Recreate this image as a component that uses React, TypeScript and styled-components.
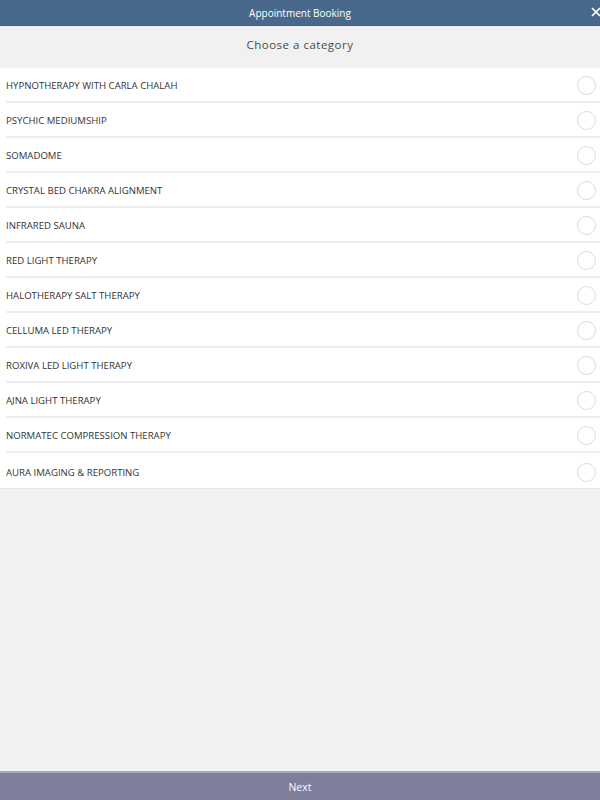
import React from 'react';
import styled, { createGlobalStyle } from 'styled-components';

const GlobalStyle = createGlobalStyle`
  html, body { margin: 0; padding: 0; height: 100%; }
  body { background: #f1f1f1; font-family: 'Open Sans', 'Liberation Sans', sans-serif; }
  #root { height: 100%; }
`;

const Page = styled.div`
  display: flex;
  flex-direction: column;
  height: 800px;
  background: #f1f1f1;
`;

const TopBar = styled.div`
  position: relative;
  height: 26px;
  background: #48698c;
  border-bottom: 1px solid #3d5c7e;
  box-sizing: border-box;
  display: flex;
  align-items: center;
  justify-content: center;
  color: #ffffff;
  font-size: 10px;
`;

const CloseButton = styled.div`
  position: absolute;
  right: -2px;
  top: 6px;
  width: 12px;
  height: 12px;
`;

const Heading = styled.div`
  height: 42px;
  box-sizing: border-box;
  padding-bottom: 5px;
  display: flex;
  align-items: center;
  justify-content: center;
  color: #4a4a4a;
  font-size: 11.5px;
  letter-spacing: 0.5px;
`;

const List = styled.div`
  background: #ffffff;
  display: flex;
  flex-direction: column;
  border-bottom: 1px solid #e6e6e6;
`;

const Row = styled.div<{ $last?: boolean }>`
  height: 35px;
  box-sizing: border-box;
  margin-left: 6px;
  padding-top: ${(p) => (p.$last ? '3px' : '2px')};
  display: flex;
  align-items: center;
  justify-content: space-between;
  border-bottom: ${(p) => (p.$last ? 'none' : '2px solid #eeeeee')};
`;

const Label = styled.span`
  font-size: 9.6px;
  color: #333333;
  text-transform: uppercase;
`;

const Radio = styled.span`
  width: 19px;
  height: 19px;
  border-radius: 50%;
  border: 1px solid #dcdcdc;
  box-sizing: border-box;
  margin-right: 4px;
`;

const Spacer = styled.div`
  flex: 1;
`;

const Footer = styled.div`
  height: 29px;
  box-sizing: border-box;
  background: #7f7e9c;
  border-top: 2px solid #a9a8bd;
  display: flex;
  align-items: center;
  justify-content: center;
  color: #ffffff;
  font-size: 10.5px;
`;

const categories = [
  'Hypnotherapy with Carla Chalah',
  'Psychic Mediumship',
  'Somadome',
  'Crystal Bed Chakra Alignment',
  'Infrared Sauna',
  'Red Light Therapy',
  'Halotherapy Salt Therapy',
  'Celluma LED Therapy',
  'Roxiva LED Light Therapy',
  'Ajna Light Therapy',
  'Normatec Compression Therapy',
  'Aura Imaging & Reporting',
];

export default function App() {
  return (
    <>
      <GlobalStyle />
      <Page>
        <TopBar>
          Appointment Booking
          <CloseButton>
            <svg width="12" height="12" viewBox="0 0 12 12">
              <path d="M2 2 L10 10 M10 2 L2 10" stroke="#fff" strokeWidth="1.6" />
            </svg>
          </CloseButton>
        </TopBar>
        <Heading>Choose a category</Heading>
        <List>
          {categories.map((c, i) => (
            <Row key={c} $last={i === categories.length - 1}>
              <Label>{c}</Label>
              <Radio />
            </Row>
          ))}
        </List>
        <Spacer />
        <Footer>Next</Footer>
      </Page>
    </>
  );
}
